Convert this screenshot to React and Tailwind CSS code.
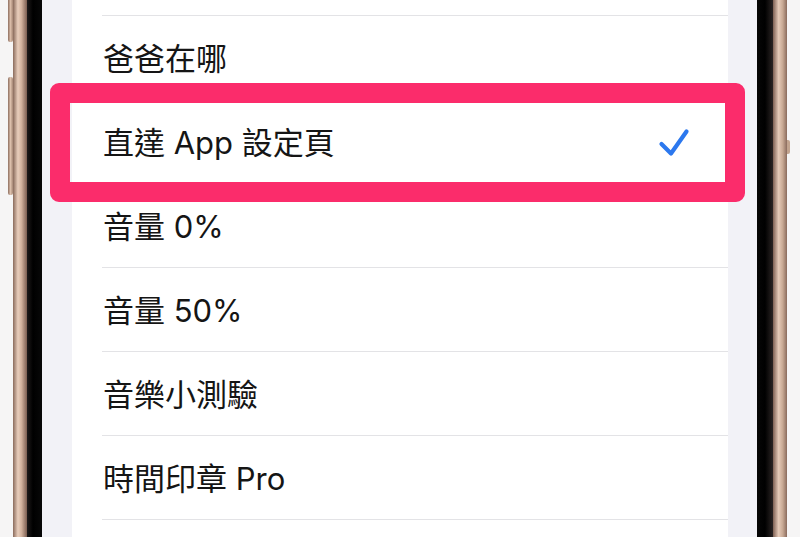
// App.jsx
const rows = ['爸爸在哪', '直達 App 設定頁', '音量 0%', '音量 50%', '音樂小測驗', '時間印章 Pro'];

function Check() {
    return (
        <svg width="32" height="30" viewBox="0 0 32 30" fill="none" className="mr-[38px] ml-auto">
            <path d="M3.5 16 L13 25.5 L28.5 3.5" stroke="#2c78ee" strokeWidth="4.2" strokeLinecap="round" strokeLinejoin="round" />
        </svg>
    );
}

function Row({ label, checked }) {
    return (
        <div>
            <div className="flex h-[83px] items-center pt-[2px] pl-[31px]">
                <span className="text-[31px] leading-none text-[#151515]">{label}</span>
                {checked && <Check />}
            </div>
            <div className="ml-[30px] h-px bg-[#e3e3e6]" />
        </div>
    );
}

export default function App() {
    return (
        <div
            className="relative flex h-[537px] w-[800px] overflow-hidden bg-[#f6f5f5]"
            style={{ fontFamily: '"Inter", "Noto Sans CJK TC", sans-serif' }}
        >
            {/* left side buttons */}
            <div className="flex w-[13px] flex-col items-end">
                <div className="h-[42px] w-[5px] rounded-b-[2px] bg-[linear-gradient(90deg,#8e6f60,#d9bba7,#a58674)]" />
                <div className="mt-[35px] h-[118px] w-[5px] rounded-[2px] bg-[linear-gradient(90deg,#8e6f60,#dcbfab,#a58674)]" />
            </div>
            {/* left frame + bezel */}
            <div className="w-[14px] bg-[linear-gradient(90deg,#8a6b5c,#e8cdbb_35%,#d3b39e_60%,#7c5e51)]" />
            <div className="w-[15px] bg-[linear-gradient(90deg,#1d1a19,#000_40%,#080808)]" />

            {/* screen */}
            <div className="flex flex-1 bg-[#f2f2f7] pr-[29px] pl-[30px]">
                <div className="flex-1 bg-white">
                    <div className="h-[15px]" />
                    <div className="ml-[30px] h-px bg-[#e3e3e6]" />
                    {rows.map((r) => (
                        <Row key={r} label={r} checked={r === '直達 App 設定頁'} />
                    ))}
                </div>
            </div>

            {/* right bezel + frame */}
            <div className="w-[16px] bg-[linear-gradient(90deg,#060606,#000_50%,#2a2423)]" />
            <div className="w-[14px] bg-[linear-gradient(90deg,#7e6053,#e5cab8_40%,#c7a893_70%,#8a6b5d)]" />
            <div className="w-[13px]">
                <div className="mt-[140px] h-[14px] w-[3px] rounded-r-[2px] bg-[#c2a48f]" />
            </div>

            {/* highlight annotation */}
            <div className="absolute top-[83px] left-[50px] h-[119px] w-[695px] rounded-[9px] border-[20px] border-[#fb2c6b]" />
        </div>
    );
}
